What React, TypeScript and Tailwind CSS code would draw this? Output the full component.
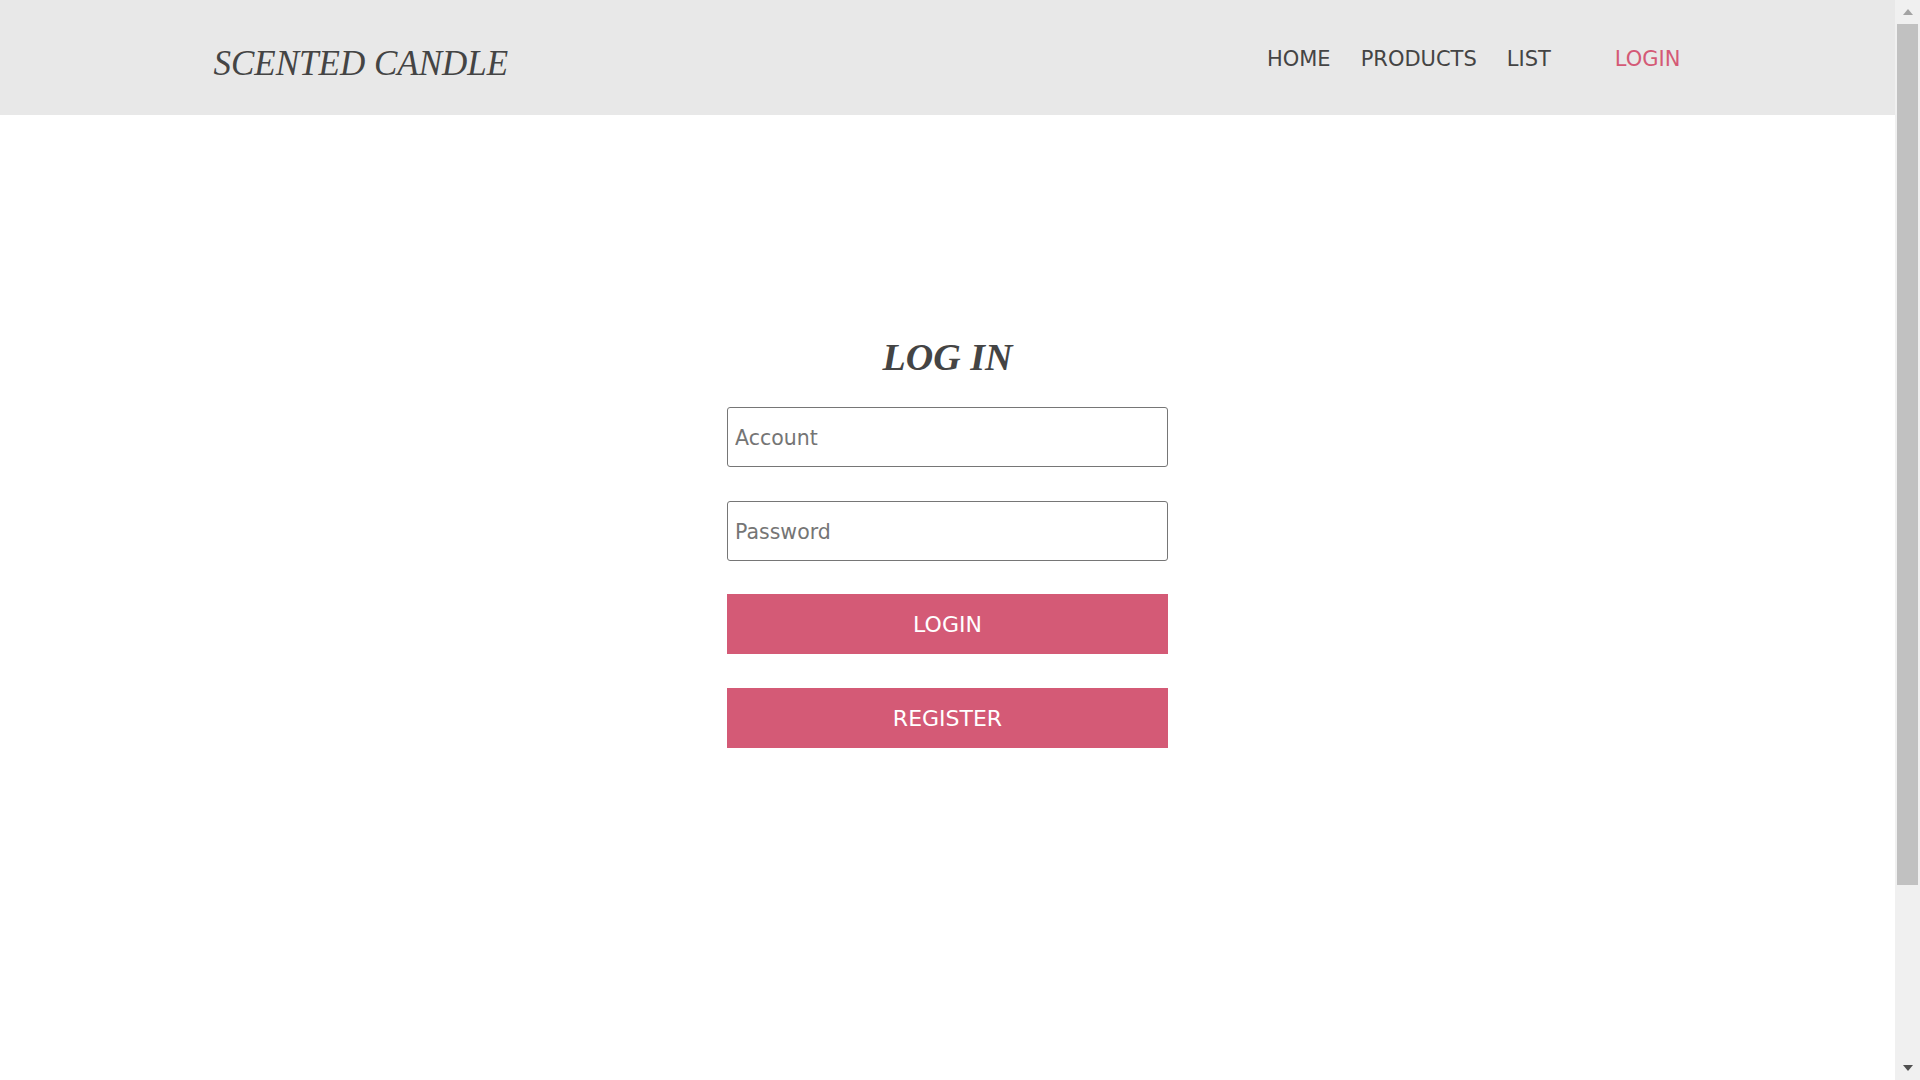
const sans = { fontFamily: '"DejaVu Sans", Verdana, sans-serif' }
const serif = { fontFamily: '"Liberation Serif", Georgia, serif' }

function Header() {
  return (
    <header className="h-[115px] bg-[#e8e8e8]">
      <div className="w-[1470px] mx-auto flex items-start justify-between">
        <a href="#" className="pt-[46px] pl-[1px] text-[35px] leading-[35px] italic text-[#444]" style={serif}>
          SCENTED CANDLE
        </a>
        <nav className="pt-[49px] pr-[2px] flex items-start gap-[30px] text-[21px] leading-[21px] text-[#444]" style={sans}>
          <a href="#">HOME</a>
          <a href="#">PRODUCTS</a>
          <a href="#">LIST</a>
          <a href="#" className="ml-[34px] text-[#d45a76]">LOGIN</a>
        </nav>
      </div>
    </header>
  )
}

function LoginForm() {
  return (
    <main className="pt-[223px] flex justify-center">
      <form className="w-[441px] flex flex-col" onSubmit={(e) => e.preventDefault()}>
        <h2 className="text-center text-[38px] leading-[38px] font-bold italic text-[#444] mb-[31px]" style={serif}>
          LOG IN
        </h2>
        <input
          type="text"
          placeholder="Account"
          className="h-[60px] border border-[#767676] rounded-[3px] px-[7px] pt-[2px] text-[20.5px] text-[#333] placeholder:text-[#757575] outline-none"
          style={sans}
        />
        <input
          type="password"
          placeholder="Password"
          className="mt-[34px] h-[60px] border border-[#767676] rounded-[3px] px-[7px] pt-[2px] text-[20.5px] text-[#333] placeholder:text-[#757575] outline-none"
          style={sans}
        />
        <button type="submit" className="mt-[33px] h-[60px] bg-[#d45a76] text-white text-[22px]" style={sans}>
          LOGIN
        </button>
        <button type="button" className="mt-[34px] h-[60px] bg-[#d45a76] text-white text-[22px]" style={sans}>
          REGISTER
        </button>
      </form>
    </main>
  )
}

function Scrollbar() {
  return (
    <div className="w-[25px] h-full bg-[#f0f0f0] flex flex-col">
      <div className="h-[24px] flex items-center justify-center">
        <svg width="10" height="6" viewBox="0 0 10 6"><polygon points="5,0 10,6 0,6" fill="#a3a3a3" /></svg>
      </div>
      <div className="h-[861px] mx-[2px] bg-[#c1c1c1]" />
      <div className="flex-1" />
      <div className="h-[24px] flex items-center justify-center">
        <svg width="10" height="6" viewBox="0 0 10 6"><polygon points="0,0 10,0 5,6" fill="#505050" /></svg>
      </div>
    </div>
  )
}

export default function App() {
  return (
    <div className="h-screen flex bg-white overflow-hidden">
      <div className="flex-1">
        <Header />
        <LoginForm />
      </div>
      <Scrollbar />
    </div>
  )
}
